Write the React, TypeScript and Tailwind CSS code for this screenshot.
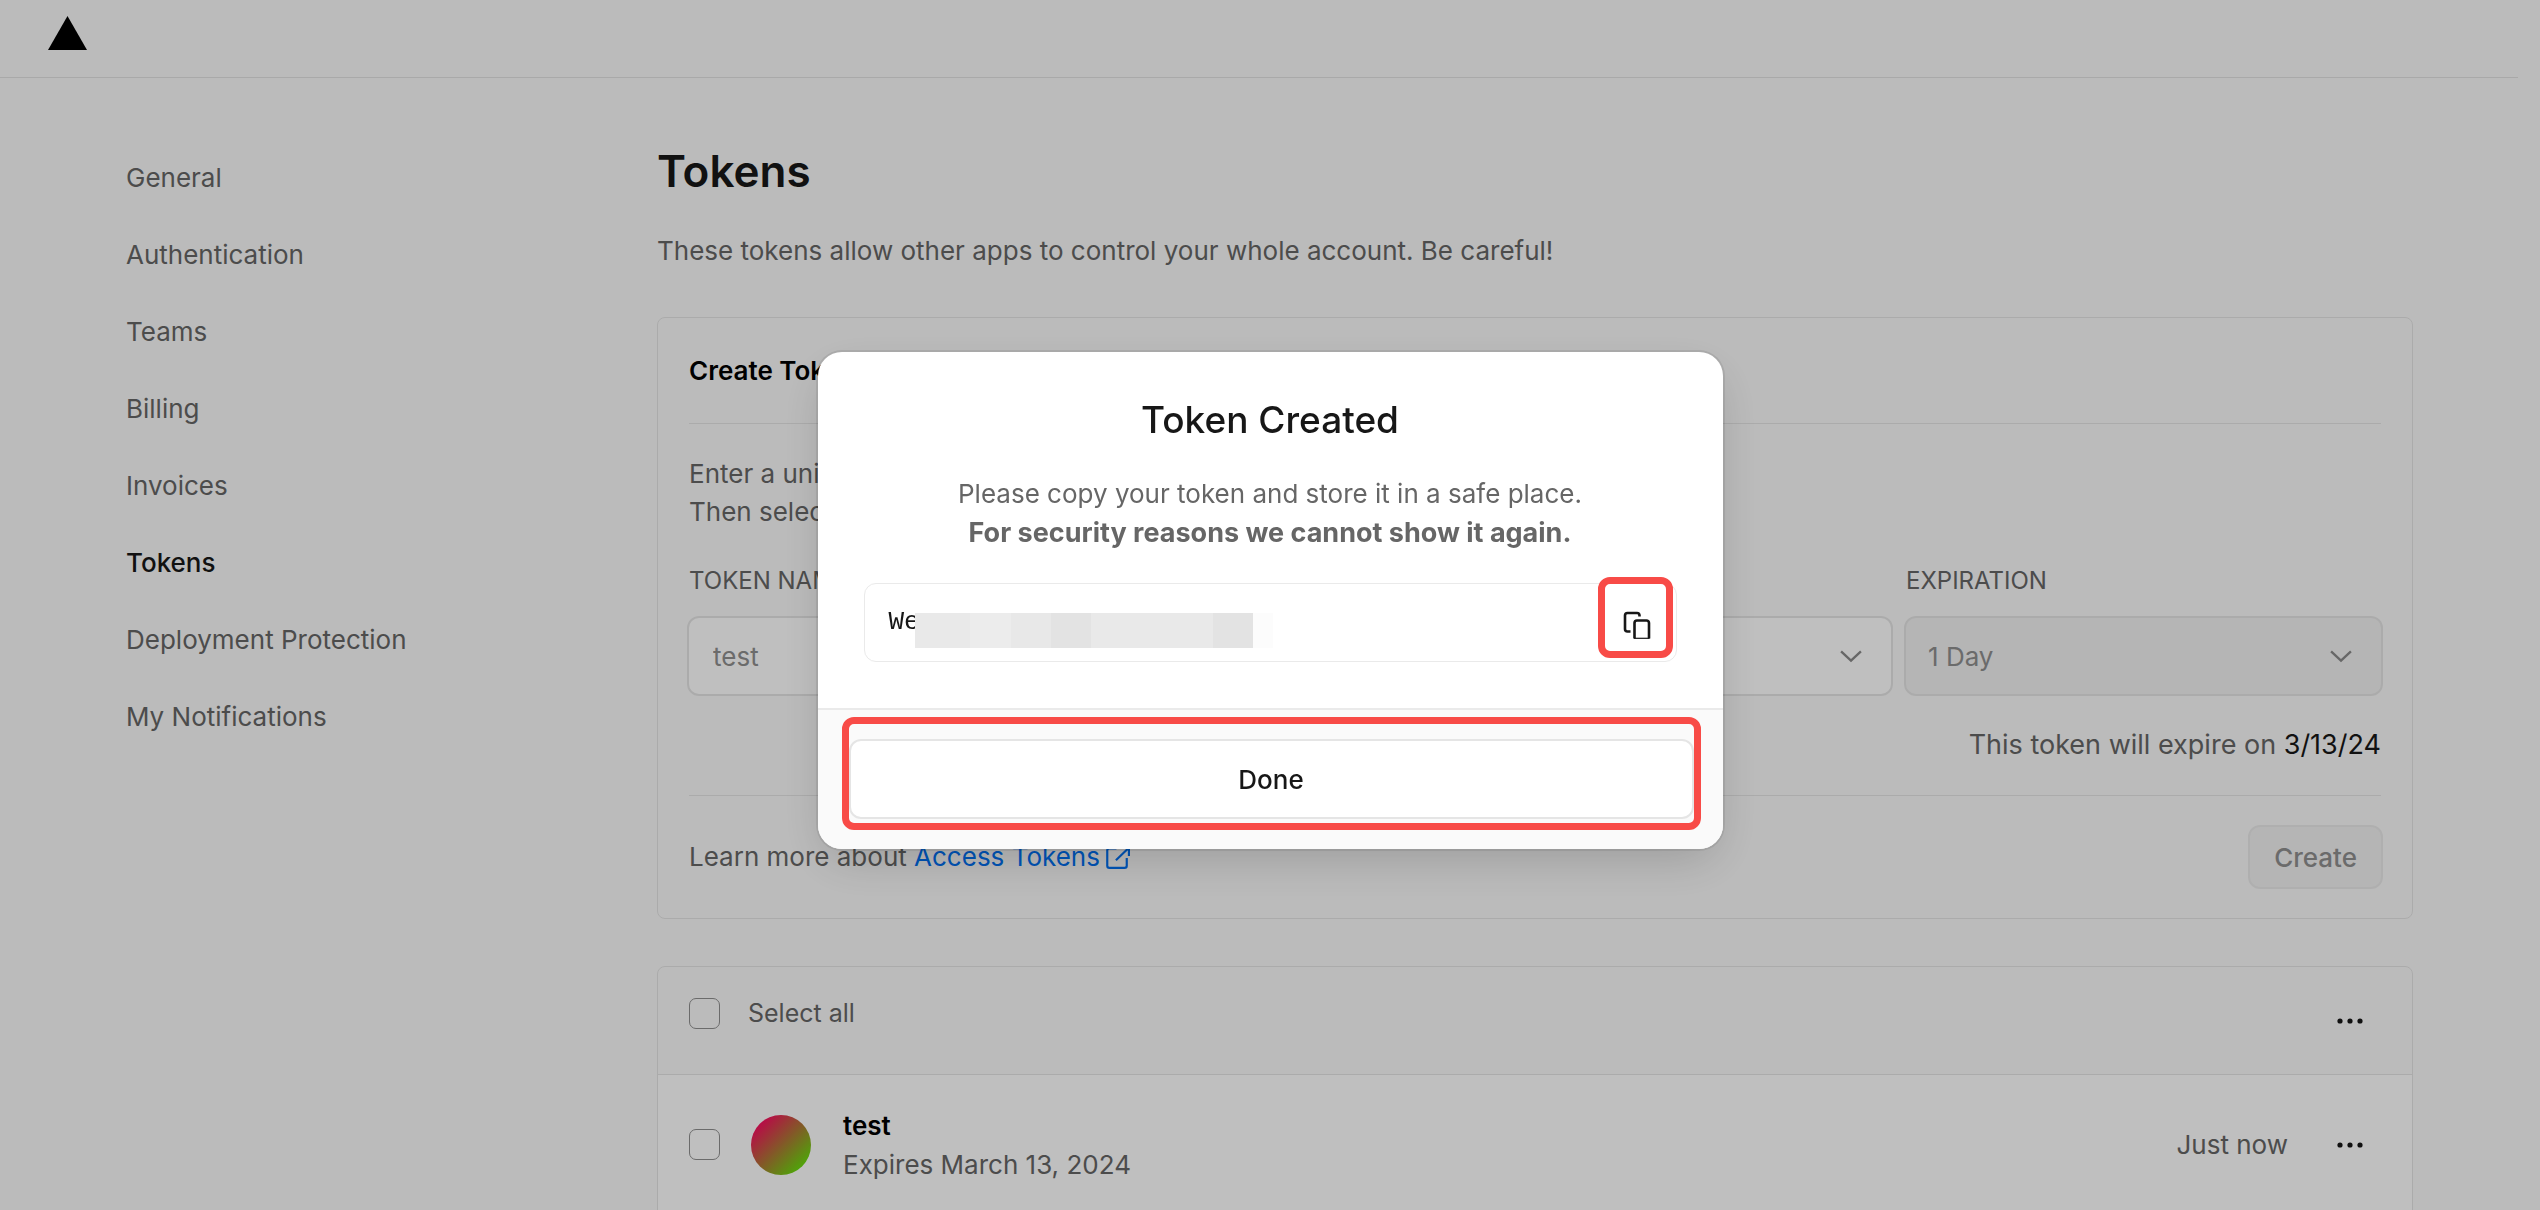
import React from "react";

const NAV = [
  "General",
  "Authentication",
  "Teams",
  "Billing",
  "Invoices",
  "Tokens",
  "Deployment Protection",
  "My Notifications",
];

function Chevron() {
  return (
    <svg viewBox="0 0 24 24" className="pointer-events-none absolute top-1/2 right-7 size-7 -translate-y-1/2" fill="none" stroke="#8a8a8a" strokeWidth="2" aria-hidden="true">
      <path d="M3.5 8 L12 16 L20.5 8" />
    </svg>
  );
}

function MoreButton({ label }: { label: string }) {
  return (
    <button type="button" aria-label={label} className="mr-[11px] flex size-10 items-center justify-center">
      <svg viewBox="0 0 28 8" className="h-2 w-7" fill="#171717" aria-hidden="true">
        <circle cx="4" cy="4" r="2.6" />
        <circle cx="14" cy="4" r="2.6" />
        <circle cx="24" cy="4" r="2.6" />
      </svg>
    </button>
  );
}

function Check({ id, label }: { id: string; label?: string }) {
  return (
    <input
      id={id}
      type="checkbox"
      aria-label={label}
      className="size-[31px] shrink-0 appearance-none rounded-[7px] border border-[#8f8f8f]"
    />
  );
}

function Field({ id, label, className, children }: { id: string; label: string; className: string; children: React.ReactNode }) {
  return (
    <div className={className}>
      <label htmlFor={id} className="block px-0.5 text-[24px] leading-9 text-[#666] uppercase">
        {label}
      </label>
      <div className="relative mt-[17px]">{children}</div>
    </div>
  );
}

function Sidebar() {
  return (
    <nav aria-label="Account settings" className="w-[531px] shrink-0 pt-[61px]">
      <ul className="flex flex-col">
        {NAV.map((item) => (
          <li key={item} className="flex h-[77px] items-center">
            <a
              href="#"
              aria-current={item === "Tokens" ? "page" : undefined}
              className={item === "Tokens" ? "font-medium text-[#171717]" : "text-[#666]"}
            >
              {item}
            </a>
          </li>
        ))}
      </ul>
    </nav>
  );
}

function CreateTokenCard() {
  return (
    <section className="mt-[47px] rounded-lg border border-[#e5e5e5] px-[31px]">
      <h2 className="border-b border-[#e5e5e5] pt-[34px] pb-[33px] leading-[38px] font-semibold text-black">Create Token</h2>
      <p className="mt-[31px] leading-[38px] text-[#666]">
        Enter a unique name.
        <br />
        Then select a scope.
      </p>
      <div className="-mx-0.5 mt-8 flex gap-[11px]">
        <Field id="token-name" label="Token name" className="flex-1">
          <input id="token-name" defaultValue="test" className="h-20 w-full rounded-xl border-2 border-[#e5e5e5] bg-white px-6 text-[#8f8f8f]" />
        </Field>
        <Field id="scope" label="Scope" className="w-[594px]">
          <select id="scope" className="h-20 w-full appearance-none rounded-xl border-2 border-[#e5e5e5] bg-white px-6 text-[#8f8f8f]">
            <option>Full Account</option>
          </select>
          <Chevron />
        </Field>
        <Field id="expiration" label="Expiration" className="w-[479px]">
          <select id="expiration" disabled className="h-20 w-full appearance-none rounded-xl border-2 border-[#e5e5e5] bg-[#f2f2f2] px-[22px] text-[#8f8f8f] opacity-100">
            <option>1 Day</option>
          </select>
          <Chevron />
        </Field>
      </div>
      <p className="mt-[30px] pb-[31px] text-right text-[27px] leading-[38px] text-[#666]">
        This token will expire on <span className="text-[#171717]">3/13/24</span>
      </p>
      <div className="flex items-center justify-between border-t border-[#e5e5e5] py-[29px]">
        <p className="leading-[38px] text-[#666]">
          Learn more about{" "}
          <a href="#" className="text-[#0070f3]">
            Access Tokens
            <svg viewBox="0 0 24 24" className="ml-1 inline size-[26px] align-[-4px]" fill="none" stroke="currentColor" strokeWidth="2" aria-hidden="true">
              <path d="M11.500 4H5a2 2 0 0 0-2 2v14a2 2 0 0 0 2 2h14a2 2 0 0 0 2-2v-7M15 3.500h8V11M22.500 4L11 15" />
            </svg>
          </a>
        </p>
        <button type="button" disabled className="-mr-0.5 h-16 rounded-xl border-2 border-[#eaeaea] bg-[#f2f2f2] px-6 font-medium text-[#8f8f8f]">
          Create
        </button>
      </div>
    </section>
  );
}

function TokenList() {
  return (
    <section className="mt-[47px] rounded-t-lg border border-[#e5e5e5]">
      <div className="flex h-[107px] items-center px-[31px]">
        <div className="flex flex-1 items-center gap-7 pb-[14px]">
          <Check id="select-all" />
          <label htmlFor="select-all" className="text-[25px] leading-[31px] text-[#666]">
            Select all
          </label>
        </div>
        <MoreButton label="Actions for selected tokens" />
      </div>
      <div className="flex h-[140px] items-center border-t border-[#e5e5e5] bg-white px-[31px]">
        <Check id="token-test" label="Select token test" />
        <div className="ml-[31px] size-[60px] rounded-full bg-linear-135/srgb from-[#f4125e] from-15% to-[#6cd80e] to-85%" />
        <div className="ml-8 flex-1">
          <p className="leading-[39px] font-semibold text-black">test</p>
          <p className="leading-[39px] text-[#666]">Expires March 13, 2024</p>
        </div>
        <span className="mr-[42px] text-[#666]">Just now</span>
        <MoreButton label="Actions for test" />
      </div>
    </section>
  );
}

function CopyIcon() {
  return (
    <svg viewBox="0 0 28 28" className="size-7" fill="none" stroke="#171717" strokeWidth="2.6" aria-hidden="true">
      <path d="M7.500 20.500H4.500a2.500 2.500 0 0 1-2.500-2.500V4.500A2.500 2.500 0 0 1 4.500 2H14a2.500 2.500 0 0 1 2.500 2.500V5.500" />
      <path d="M11.500 27.500V12a2.500 2.500 0 0 1 2.500-2.500h9.500a2.500 2.500 0 0 1 2.500 2.500v15.500" />
      <path d="M11 27.300h15.500" strokeWidth="1.200" />
    </svg>
  );
}

function TokenCreatedDialog() {
  return (
    <div className="fixed inset-0 flex items-center justify-center bg-black/25 pb-[9px]">
      <div role="dialog" aria-modal="true" aria-labelledby="dialog-title" className="w-[905px] overflow-hidden rounded-3xl bg-white shadow-[0_0_0_2px_rgba(0,0,0,0.08),0_16px_48px_-8px_rgba(0,0,0,0.18)]">
        <div className="px-[46px] pt-[42px] pb-[46px]">
          <h2 id="dialog-title" className="text-center text-[37px] leading-[52px] font-medium text-[#171717]">
            Token Created
          </h2>
          <p className="mt-7 text-center leading-[39px] text-[#666]">
            Please copy your token and store it in a safe place.
            <br />
            <b className="text-[27px] font-bold">For security reasons we cannot show it again.</b>
          </p>
          <div className="relative mt-[31px] flex h-[79px] items-center rounded-xl border border-[#eaeaea] pl-6">
            <code className="font-['Liberation_Mono',monospace] text-[26px] text-[#171717]">We</code>
            <div className="relative -ml-[5px] mt-4 flex h-[35px] w-[338px]" aria-hidden="true">
              <span className="w-[55px] bg-[#e9e9e9]" />
              <span className="w-[41px] bg-[#ececec]" />
              <span className="w-10 bg-[#e8e8e8]" />
              <span className="w-10 bg-[#e3e3e3]" />
              <span className="w-[122px] bg-[#e9e9e9]" />
              <span className="w-10 bg-[#e3e3e3]" />
            </div>
            <div className="mt-4 h-[35px] w-5 bg-[#fcfcfc]" aria-hidden="true" />
            <button type="button" aria-label="Copy token" className="absolute -top-[7px] right-[3px] flex h-[81px] w-[75px] items-center justify-center rounded-xl border-[7px] border-[#f84b47] pt-[14px] pl-1">
              <CopyIcon />
            </button>
          </div>
        </div>
        <div className="border-t-2 border-[#eaeaea] bg-[#fafafa] pt-[7px] pr-[22px] pb-[19px] pl-6">
          <div className="rounded-xl border-[7px] border-[#f84b47] pt-[15px] pb-1">
            <button type="button" className="block h-20 w-full rounded-xl border-2 border-[#e5e5e5] bg-white font-medium text-[#171717]">
              Done
            </button>
          </div>
        </div>
      </div>
    </div>
  );
}

export default function App() {
  return (
    <div className="h-screen overflow-hidden bg-[#fafafa] font-['Inter','Liberation_Sans',sans-serif] text-[26px]">
      <header className="mr-[22px] h-[78px] border-b border-[#e2e2e2] px-12 pt-4">
        <a href="#" aria-label="Home" className="block w-fit">
          <svg viewBox="0 0 40 34" className="h-[34px] w-10" aria-hidden="true">
            <path d="M19.500 0 L39 34 H0 Z" />
          </svg>
        </a>
      </header>
      <div className="flex pr-[127px] pl-[126px]">
        <Sidebar />
        <main className="min-w-0 flex-1 pt-[63px]">
          <h1 className="text-[44px] leading-[60px] font-semibold text-[#171717]">Tokens</h1>
          <p className="mt-[31px] leading-[38px] text-[#666]">
            These tokens allow other apps to control your whole account. Be careful!
          </p>
          <CreateTokenCard />
          <TokenList />
        </main>
      </div>
      <TokenCreatedDialog />
    </div>
  );
}
